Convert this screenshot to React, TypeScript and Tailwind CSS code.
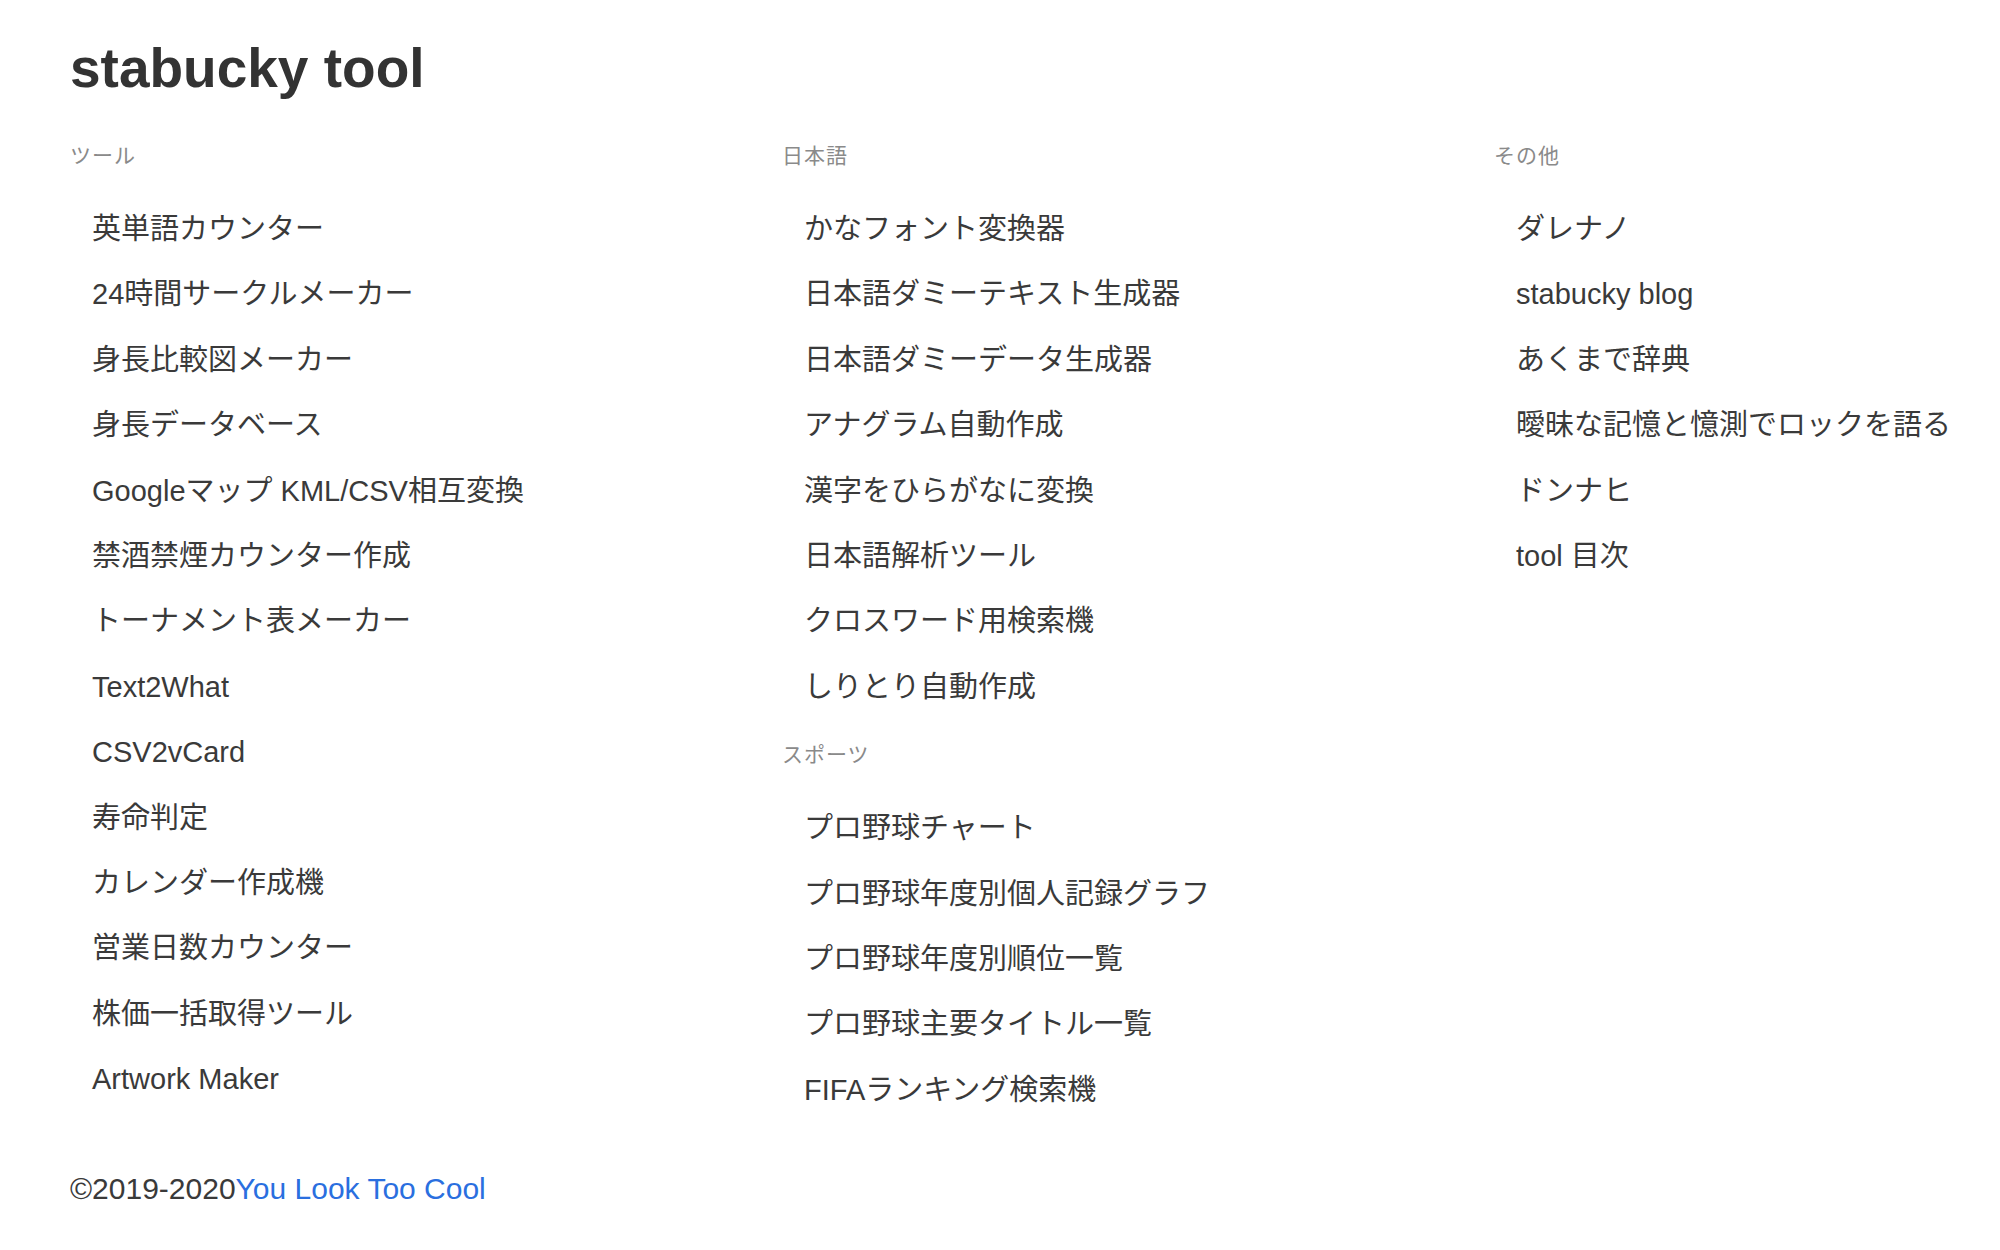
const SECTIONS: { col: number; title: string; items: string[] }[] = [
  {
    col: 0,
    title: "ツール",
    items: [
      "英単語カウンター",
      "24時間サークルメーカー",
      "身長比較図メーカー",
      "身長データベース",
      "Googleマップ KML/CSV相互変換",
      "禁酒禁煙カウンター作成",
      "トーナメント表メーカー",
      "Text2What",
      "CSV2vCard",
      "寿命判定",
      "カレンダー作成機",
      "営業日数カウンター",
      "株価一括取得ツール",
      "Artwork Maker",
    ],
  },
  {
    col: 1,
    title: "日本語",
    items: [
      "かなフォント変換器",
      "日本語ダミーテキスト生成器",
      "日本語ダミーデータ生成器",
      "アナグラム自動作成",
      "漢字をひらがなに変換",
      "日本語解析ツール",
      "クロスワード用検索機",
      "しりとり自動作成",
    ],
  },
  {
    col: 1,
    title: "スポーツ",
    items: [
      "プロ野球チャート",
      "プロ野球年度別個人記録グラフ",
      "プロ野球年度別順位一覧",
      "プロ野球主要タイトル一覧",
      "FIFAランキング検索機",
    ],
  },
  {
    col: 2,
    title: "その他",
    items: [
      "ダレナノ",
      "stabucky blog",
      "あくまで辞典",
      "曖昧な記憶と憶測でロックを語る",
      "ドンナヒ",
      "tool 目次",
    ],
  },
];

function Section({ title, items }: { title: string; items: string[] }) {
  return (
    <section className="mb-[20px]">
      <h2 className="text-[21px] leading-[30px] text-[#8a8a8a] tracking-[1px]">{title}</h2>
      <ul className="mt-[26px]">
        {items.map((item) => (
          <li key={item} className="pl-[22px] text-[29px] leading-[65.4px] text-[#3a3a3a] whitespace-nowrap">
            <a href="#">{item}</a>
          </li>
        ))}
      </ul>
    </section>
  );
}

export default function App() {
  return (
    <div
      className="min-h-screen bg-white pl-[70px] pt-[36px]"
      style={{ fontFamily: '"Liberation Sans", "Noto Sans CJK JP", sans-serif' }}
    >
      <h1 className="text-[55px] leading-[64px] font-bold text-[#333333]">stabucky tool</h1>

      {/* columns */}
      <div className="mt-[41px] grid grid-cols-[712px_712px_1fr]">
        {[0, 1, 2].map((c) => (
          <div key={c}>
            {SECTIONS.filter((s) => s.col === c).map((s) => (
              <Section key={s.title} title={s.title} items={s.items} />
            ))}
          </div>
        ))}
      </div>

      {/* footer */}
      <footer className="mt-[26px] text-[30px] leading-[40px] text-[#3a3a3a]">
        ©2019-2020<a href="#" className="text-[#2a6fdf]">You Look Too Cool</a>
      </footer>
    </div>
  );
}
